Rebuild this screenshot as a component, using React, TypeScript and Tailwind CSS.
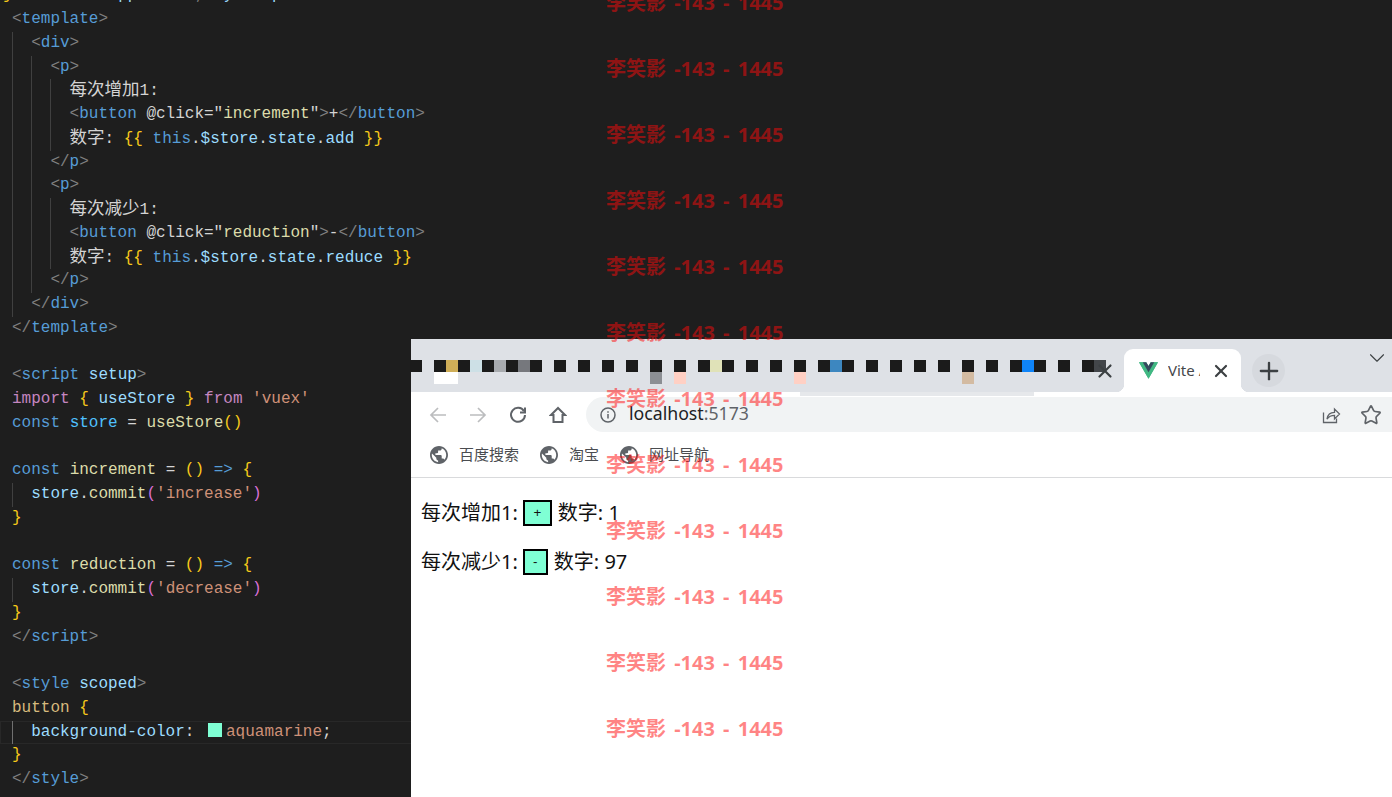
import React from 'react';
import { Plus, ChevronDown, Star, X } from 'lucide-react';

const CJK = '[font-family:"Noto_Sans_CJK_SC",sans-serif]';
const MIXED = '[font-family:"Noto_Sans","Noto_Sans_CJK_SC",sans-serif]';

// tiny token helpers, one per syntax colour
const T = ({ c, children }: { c: string; children: React.ReactNode }) => <span className={c}>{children}</span>;
const P = ({ children }: { children: React.ReactNode }) => <T c="text-[#808080]">{children}</T>;
const B = ({ children }: { children: React.ReactNode }) => <T c="text-[#569cd6]">{children}</T>;
const V = ({ children }: { children: React.ReactNode }) => <T c="text-[#9cdcfe]">{children}</T>;
const F = ({ children }: { children: React.ReactNode }) => <T c="text-[#dcdcaa]">{children}</T>;
const G = ({ children }: { children: React.ReactNode }) => <T c="text-[#f7c91a]">{children}</T>;
const S = ({ children }: { children: React.ReactNode }) => <T c="text-[#ce9178]">{children}</T>;
const Z = ({ children }: { children: React.ReactNode }) => (
  <span className={`text-[17.5px] leading-none text-[#d4d4d4] ${CJK}`}>{children}</span>
);

const Line = ({ indent = 0, active = false, children }: { indent?: number; active?: boolean; children?: React.ReactNode }) => (
  <div className={`flex h-[23.75px] pl-3 whitespace-pre ${active ? 'shadow-[inset_0_0_0_1px_#282828]' : ''}`}>
    {Array.from({ length: indent }).map((_, i) => (
      <span key={i} className={`w-[19.2px] flex-none border-l ${active ? 'border-[#707070]' : 'border-[#404040]'}`} />
    ))}
    <span className="h-[23.75px] leading-[23.75px]">{children}</span>
  </div>
);

const CodePane = () => (
  <div className="-mt-[15.6px] h-[813px] w-full overflow-hidden font-['Liberation_Mono',monospace] text-[16px] text-[#d4d4d4]">
    <Line>
      <span className="-ml-[9px]"><G>{'}'}</G></span>           <V>pp</V>      <P>,</P>  <V>y</V>    <V>p</V>     <T c="text-[#e8912d]">'</T>
    </Line>
    <Line><P>{'<'}</P><B>template</B><P>{'>'}</P></Line>
    <Line indent={1}><P>{'<'}</P><B>div</B><P>{'>'}</P></Line>
    <Line indent={2}><P>{'<'}</P><B>p</B><P>{'>'}</P></Line>
    <Line indent={3}><Z>每次增加</Z>1:</Line>
    <Line indent={3}><P>{'<'}</P><B>button</B> @click="<F>increment</F>"<P>{'>'}</P>+<P>{'</'}</P><B>button</B><P>{'>'}</P></Line>
    <Line indent={3}><Z>数字</Z>: <G>{'{{'}</G> <B>this</B>.<V>$store</V>.<V>state</V>.<V>add</V> <G>{'}}'}</G></Line>
    <Line indent={2}><P>{'</'}</P><B>p</B><P>{'>'}</P></Line>
    <Line indent={2}><P>{'<'}</P><B>p</B><P>{'>'}</P></Line>
    <Line indent={3}><Z>每次减少</Z>1:</Line>
    <Line indent={3}><P>{'<'}</P><B>button</B> @click="<F>reduction</F>"<P>{'>'}</P>-<P>{'</'}</P><B>button</B><P>{'>'}</P></Line>
    <Line indent={3}><Z>数字</Z>: <G>{'{{'}</G> <B>this</B>.<V>$store</V>.<V>state</V>.<V>reduce</V> <G>{'}}'}</G></Line>
    <Line indent={2}><P>{'</'}</P><B>p</B><P>{'>'}</P></Line>
    <Line indent={1}><P>{'</'}</P><B>div</B><P>{'>'}</P></Line>
    <Line><P>{'</'}</P><B>template</B><P>{'>'}</P></Line>
    <Line />
    <Line><P>{'<'}</P><B>script</B> <V>setup</V><P>{'>'}</P></Line>
    <Line><T c="text-[#c586c0]">import</T> <G>{'{'}</G> <V>useStore</V> <G>{'}'}</G> <T c="text-[#c586c0]">from</T> <S>'vuex'</S></Line>
    <Line><B>const</B> <T c="text-[#4fc1ff]">store</T> = <F>useStore</F><G>()</G></Line>
    <Line />
    <Line><B>const</B> <F>increment</F> = <G>()</G> <B>{'=>'}</B> <G>{'{'}</G></Line>
    <Line indent={1}><V>store</V>.<F>commit</F><T c="text-[#da70d6]">(</T><S>'increase'</S><T c="text-[#da70d6]">)</T></Line>
    <Line><G>{'}'}</G></Line>
    <Line />
    <Line><B>const</B> <F>reduction</F> = <G>()</G> <B>{'=>'}</B> <G>{'{'}</G></Line>
    <Line indent={1}><V>store</V>.<F>commit</F><T c="text-[#da70d6]">(</T><S>'decrease'</S><T c="text-[#da70d6]">)</T></Line>
    <Line><G>{'}'}</G></Line>
    <Line><P>{'</'}</P><B>script</B><P>{'>'}</P></Line>
    <Line />
    <Line><P>{'<'}</P><B>style</B> <V>scoped</V><P>{'>'}</P></Line>
    <Line><T c="text-[#d7ba7d]">button</T> <G>{'{'}</G></Line>
    <Line indent={1} active>
      <V>background-color</V>: <span className="mx-1 inline-block size-[14px] translate-y-[1px] bg-[#7fffd4]" /><S>aquamarine</S>;
    </Line>
    <Line><G>{'}'}</G></Line>
    <Line><P>{'</'}</P><B>style</B><P>{'>'}</P></Line>
  </div>
);

// blurred-out tabs: one letter per 12px cell
const PALETTE: Record<string, string> = {
  k: 'bg-[#1b1b1b]',
  g: 'bg-[#cfae58]',
  l: 'bg-[#cde0e6]',
  a: 'bg-[#a8abaf]',
  d: 'bg-[#76787d]',
  y: 'bg-[#e0e2b8]',
  b: 'bg-[#3d87c0]',
  u: 'bg-[#0f84f8]',
  e: 'bg-[#43464a]',
  w: 'bg-white',
  m: 'bg-[#8c8f94]',
  p: 'bg-[#ffd0c4]',
  t: 'bg-[#d3bba2]',
};
const MOSAIC_TOP = 'k.kgklkakdk.k.k.k.k.k.k.kyk.k.k.k.kbk.k.k.k.k.k.k.kuk.k.ke';
const MOSAIC_BOTTOM = '..ww................m.p.........p.............t...........';

const Mosaic = () => (
  <div className="relative h-full w-[713px] flex-none">
    <div className="-ml-px grid grid-cols-[repeat(58,12px)] auto-rows-[12px] pt-[21px]">
      {(MOSAIC_TOP + MOSAIC_BOTTOM).split('').map((ch, i) => (
        <span key={i} className={PALETTE[ch]} />
      ))}
    </div>
    <X className="absolute right-[8px] top-[21px] size-[22px] text-[#3c4043]" strokeWidth={2.4} />
  </div>
);

const VueLogo = () => (
  <svg viewBox="0 0 256 221" className="h-[17px] w-[19px] flex-none">
    <path fill="#41b883" d="M204.8 0H256L128 220.8 0 0h97.92L128 51.2 157.44 0h47.36Z" />
    <path fill="#41b883" d="M0 0l128 220.8L256 0h-51.2L128 132.48 50.56 0H0Z" />
    <path fill="#35495e" d="M50.56 0L128 133.12 204.8 0h-47.36L128 51.2 97.92 0H50.56Z" />
  </svg>
);

const Tab = () => (
  <div className="relative flex h-[43px] w-[117px] flex-none items-center self-end rounded-t-[9px] bg-white pl-[15px]">
    <span className="absolute bottom-0 -left-2 size-2 bg-[radial-gradient(circle_at_0_0,#dee1e6_8px,#ffffff_8.5px)]" />
    <span className="absolute bottom-0 -right-2 size-2 bg-[radial-gradient(circle_at_100%_0,#dee1e6_8px,#ffffff_8.5px)]" />
    <VueLogo />
    <span className="ml-[10px] w-[32px] overflow-hidden font-['Noto_Sans',sans-serif] text-[15px] whitespace-pre text-[#45474a]">Vite /</span>
    <X className="ml-[11px] size-[20px] flex-none text-[#3c4043]" strokeWidth={2.6} />
  </div>
);

const Globe = () => (
  <svg viewBox="2 2 20 20" className="size-[18px] flex-none" fill="#5f6368">
    <path d="M12 2C6.48 2 2 6.48 2 12s4.48 10 10 10 10-4.48 10-10S17.52 2 12 2zm-1 17.93c-3.95-.49-7-3.85-7-7.93 0-.62.08-1.21.21-1.79L9 15v1c0 1.1.9 2 2 2v1.93zm6.9-2.54c-.26-.81-1-1.39-1.9-1.39h-1v-3c0-.55-.45-1-1-1H8v-2h2c.55 0 1-.45 1-1V7h2c1.1 0 2-.9 2-2v-.41c2.93 1.19 5 4.06 5 7.41 0 2.08-.8 3.97-2.1 5.39z" />
  </svg>
);

const Bookmark = ({ label }: { label: string }) => (
  <div className="flex items-center gap-[11px]">
    <Globe />
    <span className={`-mt-[2px] text-[15px] text-[#4a4c50] ${CJK}`}>{label}</span>
  </div>
);

const ShareIcon = () => (
  <svg viewBox="0 0 20 20" className="size-[20px]" fill="none" stroke="#5f6368" strokeWidth="1.3">
    <path d="M2.5 7.5v10h13v-4" />
    <path d="M6 14c.6-4 3.6-6.6 7.5-6.6V4l5 5-5 5v-3.6c-3 0-5.6 1-7.5 3.6Z" />
  </svg>
);

const NavArrow = ({ flip = false }: { flip?: boolean }) => (
  <svg viewBox="0 0 18 18" className={`size-[18px] ${flip ? '-scale-x-100' : ''}`} fill="none" stroke="#bcbdbf" strokeWidth="1.7">
    <path d="M17 9H2M9 2 2 9l7 7" />
  </svg>
);

const ReloadIcon = () => (
  <svg viewBox="0 0 18 18" className="size-[18px]" fill="none" stroke="#5f6368" strokeWidth="2">
    <path d="M15 5.2A7 7 0 1 0 16 9" />
    <path d="M16 1.5v5h-5" />
  </svg>
);

const HomeIcon = () => (
  <svg viewBox="0 0 18 18" className="size-[18px]" fill="none" stroke="#5f6368" strokeWidth="2">
    <path d="M9 2 2 9h2.5v7h9V9H16Z" />
  </svg>
);

const Toolbar = () => (
  <div className="relative flex h-[44px] flex-none items-center pt-[1px]">
    <span className="absolute top-0 left-[389px] h-[4px] w-[234px] bg-[#e6e8eb]" />
    <div className="ml-[18px]"><NavArrow /></div>
    <div className="ml-[22px]"><NavArrow flip /></div>
    <div className="ml-[22px]"><ReloadIcon /></div>
    <div className="ml-[22px]"><HomeIcon /></div>
    <div className="ml-[19px] flex h-[35px] flex-1 items-center rounded-l-full rounded-r-[18px] bg-[#f1f3f4] pl-[14px]">
      <svg viewBox="0 0 16 16" className="size-[16px]" fill="none" stroke="#5f6368" strokeWidth="1.5">
        <circle cx="8" cy="8" r="7" />
        <path d="M8 7v4.5M8 4.2v1.6" />
      </svg>
      <span className="-mt-[2px] ml-[13px] font-['Noto_Sans',sans-serif] text-[17.7px] text-[#5f6368]">
        <span className="text-[#202124]">localhost</span>:5173
      </span>
      <div className="ml-auto flex items-center gap-[19px] pr-[10px]">
        <ShareIcon />
        <Star className="size-[22px] text-[#5f6368]" strokeWidth={1.8} />
      </div>
    </div>
  </div>
);

const Counter = ({ label, sign, value }: { label: string; sign: string; value: number }) => (
  <p className="mt-5 flex h-[29px] items-center text-[20px] text-[#111]">
    <span>{label}1:</span>
    <button className={`ml-[5px] h-[26px] border-2 border-black bg-[#7fffd4] font-['Liberation_Sans',sans-serif] text-[13.33px] ${sign === '+' ? 'w-[29px]' : 'w-[25px]'}`}>
      {sign}
    </button>
    <span className="ml-[6px]">数字: {value}</span>
  </p>
);

const BrowserWindow = () => (
  <div className="absolute top-[339px] right-0 bottom-0 left-[411px] flex flex-col bg-white">
    <div className="flex h-[53px] flex-none bg-[#dee1e6]">
      <Mosaic />
      <Tab />
      <div className="mt-[15px] ml-[11px] flex size-[33px] flex-none items-center justify-center rounded-full bg-[#d6d9de]">
        <Plus className="size-[28px] flex-none text-[#3c4043]" strokeWidth={2} />
      </div>
      <ChevronDown className="mt-[6px] mr-[2px] ml-auto size-[26px] text-[#3c4043]" strokeWidth={1} />
    </div>
    <Toolbar />
    <div className="flex h-[42px] flex-none items-center gap-[21px] border-b border-[#d9dadc] pb-[3px] pl-[19px]">
      <Bookmark label="百度搜索" />
      <Bookmark label="淘宝" />
      <Bookmark label="网址导航" />
    </div>
    <div className={`pl-[10px] ${MIXED}`}>
      <Counter label="每次增加" sign="+" value={1} />
      <Counter label="每次减少" sign="-" value={97} />
    </div>
  </div>
);

const Watermark = () => (
  <div className="pointer-events-none absolute top-0 left-[606px] -mt-[30px] flex flex-col">
    {Array.from({ length: 12 }).map((_, i) => (
      <div key={i} className={`h-[66px] text-[20px] leading-[66px] font-bold [word-spacing:3px] whitespace-pre text-[#ff0a0a]/50 ${MIXED}`}>
        李笑影 -143 - 1445
      </div>
    ))}
  </div>
);

export default function App() {
  return (
    <div className="relative h-[797px] w-[1392px] overflow-hidden bg-[#1e1e1e]">
      <CodePane />
      <BrowserWindow />
      <Watermark />
    </div>
  );
}
